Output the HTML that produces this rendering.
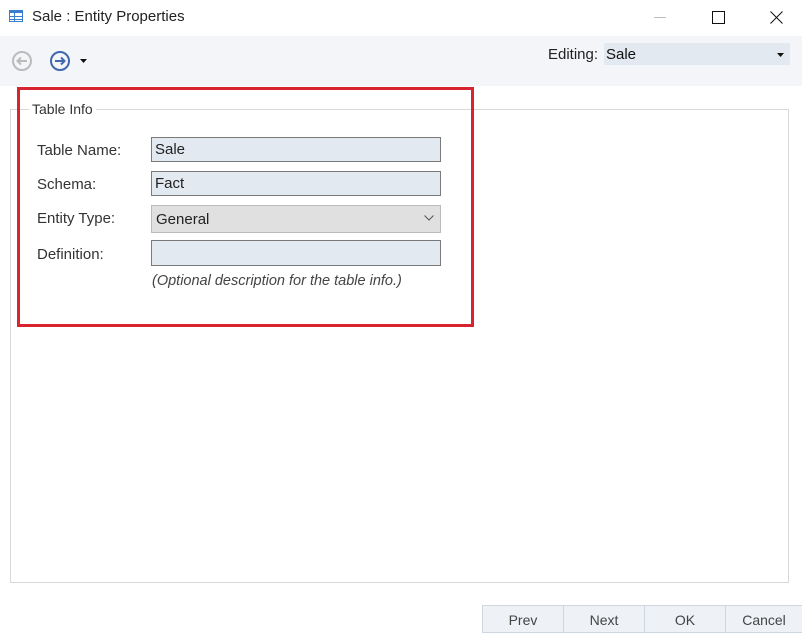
<!DOCTYPE html>
<html><head><style>
body{margin:0;width:802px;height:631px;background:#fff;font-family:"Liberation Sans",sans-serif;position:relative;overflow:hidden;color:#222}
.a{position:absolute}
.lbl{font-size:15px;color:#333}
.inp{background:#e3e9f1;border:1px solid #7a7a7a;box-sizing:border-box;font-size:15px;padding:3px 0 0 3px;color:#222}
.btn{background:#eef2f7;border:1px solid #cfd6de;box-sizing:border-box;font-size:14px;text-align:center;line-height:28px;color:#444;top:605px;height:28px}
</style></head><body>
<svg class="a" style="left:9px;top:10px" width="14" height="13"><rect x="0.5" y="0.5" width="13" height="11" fill="#fff" stroke="#3b7ecf"/><rect x="0" y="0" width="14" height="3" fill="#3b7ecf"/><path d="M1 6.5H13M1 9.5H13M5.5 3V12" stroke="#3b7ecf"/></svg>
<div class="a" style="left:32px;top:8px;font-size:15px;color:#222">Sale : Entity Properties</div>
<div class="a" style="left:654px;top:17px;width:12px;height:1px;background:#bbb"></div>
<div class="a" style="left:712px;top:11px;width:11px;height:11px;border:1px solid #111"></div>
<svg class="a" style="left:770px;top:11px" width="13" height="13"><path d="M0.5 0.5L12.5 12.5M12.5 0.5L0.5 12.5" stroke="#111"/></svg>
<div class="a" style="left:0;top:36px;width:802px;height:50px;background:#f3f5f8"></div>
<svg class="a" style="left:11px;top:50px" width="22" height="22"><circle cx="11" cy="11" r="9" fill="none" stroke="#bbb" stroke-width="2"/><path d="M16 11H7M10 7.5L6.5 11L10 14.5" fill="none" stroke="#bbb" stroke-width="2"/></svg>
<svg class="a" style="left:49px;top:50px" width="22" height="22"><circle cx="11" cy="11" r="9" fill="none" stroke="#3f67b0" stroke-width="2"/><path d="M6 11H15M12 7.5L15.5 11L12 14.5" fill="none" stroke="#3f67b0" stroke-width="2"/></svg>
<svg class="a" style="left:80px;top:59px" width="7" height="4"><path d="M0 0H7L3.5 4Z" fill="#111"/></svg>
<div class="a" style="left:548px;top:46px;font-size:15px;color:#222">Editing:</div>
<div class="a" style="left:604px;top:43px;width:186px;height:22px;background:#e3e9f0"></div>
<div class="a" style="left:606px;top:46px;font-size:15px;color:#111">Sale</div>
<svg class="a" style="left:777px;top:53px" width="7" height="4"><path d="M0 0H7L3.5 4Z" fill="#111"/></svg>
<div class="a" style="left:10px;top:109px;width:779px;height:474px;border:1px solid #d8d8d8;box-sizing:border-box"></div>
<div class="a" style="left:29px;top:101px;background:#fff;padding:0 3px;font-size:14px;color:#333">Table Info</div>
<div class="a lbl" style="left:37px;top:142px">Table Name:</div>
<div class="a lbl" style="left:37px;top:176px">Schema:</div>
<div class="a lbl" style="left:37px;top:210px">Entity Type:</div>
<div class="a lbl" style="left:37px;top:246px">Definition:</div>
<div class="a inp" style="left:151px;top:137px;width:290px;height:25px">Sale</div>
<div class="a inp" style="left:151px;top:171px;width:290px;height:25px">Fact</div>
<div class="a inp" style="left:151px;top:205px;width:290px;height:28px;background:#e0e0e0;border-color:#bbb;padding:5px 0 0 4px">General</div>
<svg class="a" style="left:424px;top:215px" width="10" height="6"><path d="M0.5 0.5L5 5L9.5 0.5" fill="none" stroke="#555"/></svg>
<div class="a inp" style="left:151px;top:240px;width:290px;height:26px"></div>
<div class="a" style="left:152px;top:273px;font-size:14.5px;font-style:italic;color:#444">(Optional description for the table info.)</div>
<div class="a" style="left:17px;top:87px;width:457px;height:240px;border:3px solid #d7242f;box-sizing:border-box"></div>
<div class="a btn" style="left:482px;width:82px">Prev</div>
<div class="a btn" style="left:563px;width:82px">Next</div>
<div class="a btn" style="left:644px;width:82px">OK</div>
<div class="a btn" style="left:725px;width:78px">Cancel</div>
</body></html>
